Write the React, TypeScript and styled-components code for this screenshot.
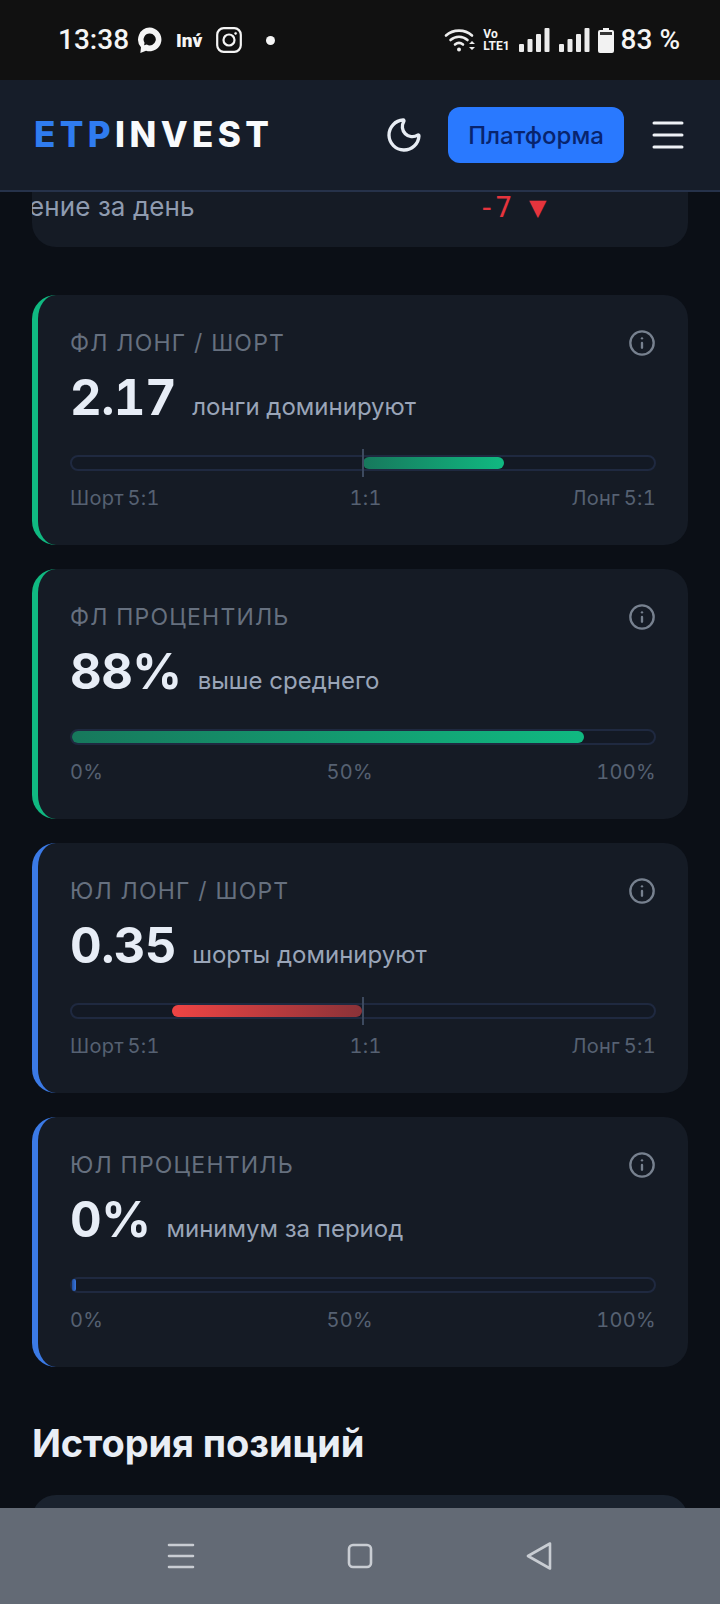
import React from 'react';
import styled, { createGlobalStyle } from 'styled-components';
import { Info, Moon } from 'lucide-react';

const GlobalStyle = createGlobalStyle`
  html, body {
    margin: 0;
    padding: 0;
    background: #0b0f17;
  }
  * {
    box-sizing: border-box;
  }
`;

const Screen = styled.div`
  width: 720px;
  height: 1604px;
  display: flex;
  flex-direction: column;
  overflow: hidden;
  background: #0b0f16;
  font-family: Inter, 'Noto Sans', sans-serif;
`;

const StatusBar = styled.div`
  height: 80px;
  flex: none;
  display: flex;
  align-items: center;
  justify-content: space-between;
  padding: 0 40px 0 58px;
  background: #111111;
  color: #f5f5f5;
  font-family: Roboto, sans-serif;
`;

const StatusGroup = styled.div`
  display: flex;
  align-items: center;
`;

const StatusText = styled.span`
  font-size: 28px;
  font-weight: 500;
  line-height: 32px;
`;

const InvMark = styled.span`
  margin: 0 14px 0 13px;
  font-size: 19px;
  font-weight: 900;
`;

const Dot = styled.span`
  width: 9px;
  height: 9px;
  margin-left: 24px;
  border-radius: 50%;
  background: #f5f5f5;
`;

const VoLte = styled.span`
  display: flex;
  flex-direction: column;
  margin: 0 9px 0 8px;
  font-size: 12px;
  font-weight: 700;
  line-height: 12px;
`;

const SignalGap = styled.span`
  width: 9px;
`;

const Header = styled.header`
  height: 112px;
  flex: none;
  display: flex;
  align-items: center;
  padding: 0 36px 0 34px;
  background: #161d29;
  border-bottom: 2px solid #26324a;
`;

const Logo = styled.div`
  flex: 1;
  margin-bottom: 2px;
  font-size: 35px;
  font-weight: 800;
  letter-spacing: 4.4px;
  color: #f8fafc;
`;

const LogoAccent = styled.span`
  color: #2f7cf0;
`;

const ThemeToggle = styled.div`
  display: flex;
  margin-right: 24px;
  color: #e8edf4;
`;

const PlatformButton = styled.div`
  width: 176px;
  height: 56px;
  display: flex;
  align-items: center;
  justify-content: center;
  border-radius: 12px;
  background: #2979ff;
  color: #08246e;
  font-size: 24px;
  font-weight: 500;
`;

const Burger = styled.svg`
  width: 32px;
  height: 30px;
  margin-left: 28px;
`;

const Main = styled.main`
  flex: 1;
  min-height: 0;
  overflow: hidden;
  padding: 0 32px;
`;

const ClippedCard = styled.div`
  height: 55px;
  display: flex;
  overflow: hidden;
  border-radius: 0 0 24px 24px;
  background: #151b25;
  font-size: 26px;
  line-height: 30px;
`;

const ClippedLabel = styled.span`
  width: 449px;
  flex: none;
  margin-left: -3px;
  color: #8f9bb0;
  letter-spacing: 0.1px;
  white-space: nowrap;
`;

const DayChange = styled.span`
  color: #e5343d;
  font-family: 'DejaVu Sans Mono', monospace;
  font-size: 29px;
  letter-spacing: -0.5px;
`;

const CardList = styled.div`
  display: flex;
  flex-direction: column;
  gap: 24px;
  margin-top: 48px;
`;

const Card = styled.section<{ $accent: string }>`
  height: 250px;
  padding: 32px 32px 0 32px;
  border-left: 6px solid ${(p) => p.$accent};
  border-radius: 24px;
  background: #151b25;
`;

const CardTop = styled.div`
  display: flex;
  align-items: center;
  justify-content: space-between;
  height: 32px;
`;

const CardLabel = styled.div`
  color: #66707f;
  font-size: 23px;
  letter-spacing: 1.2px;
`;

const InfoIcon = styled(Info)`
  color: #77818f;
`;

const ValueRow = styled.div`
  display: flex;
  align-items: baseline;
  gap: 16px;
  margin-top: 8px;
  height: 62px;
`;

const Value = styled.span`
  color: #e7edf6;
  font-size: 49px;
  font-weight: 700;
  font-feature-settings: 'tnum';
  letter-spacing: -0.5px;
  line-height: 62px;
`;

const ValueNote = styled.span`
  color: #9aa5b8;
  font-size: 24px;
`;

const Track = styled.div`
  position: relative;
  height: 16px;
  margin-top: 26px;
  border: 2px solid #1f2940;
  border-radius: 8px;
  background: #131924;
`;

const Fill = styled.div<{ $from: number; $to: number; $colors: string }>`
  position: absolute;
  top: 0;
  bottom: 0;
  left: ${(p) => p.$from}px;
  width: ${(p) => p.$to - p.$from}px;
  border-radius: 6px;
  background: linear-gradient(90deg, ${(p) => p.$colors});
`;

const CenterMark = styled.div`
  position: absolute;
  top: -8px;
  bottom: -8px;
  left: 290px;
  width: 2px;
  background: #3d4a5f;
`;

const Scale = styled.div`
  display: flex;
  justify-content: space-between;
  margin-top: 13px;
  color: #566172;
  font-size: 20px;
  font-feature-settings: 'tnum';
  letter-spacing: 0.3px;
  word-spacing: -2px;
  line-height: 28px;
`;

const SectionTitle = styled.h2`
  margin: 53px 0 0;
  color: #e9eef5;
  font-size: 38px;
  font-weight: 700;
  letter-spacing: -0.1px;
  line-height: 46px;
`;

const NextCard = styled.div`
  height: 60px;
  margin-top: 29px;
  border-radius: 24px;
  background: #1a222e;
`;

const NavBar = styled.nav`
  height: 96px;
  flex: none;
  display: flex;
  align-items: center;
  justify-content: center;
  gap: 151px;
  background: #636a75;
`;

const NavIcon = styled.svg`
  width: 28px;
  height: 28px;
  fill: none;
  stroke: #c9cdd3;
  stroke-width: 2.6;
  stroke-linecap: round;
  stroke-linejoin: round;
`;

type CardData = {
  label: string;
  value: string;
  note: string;
  accent: string;
  scale: string[];
  from: number;
  to: number;
  colors: string;
  centered?: boolean;
};

const GREEN = '#10b981';
const BLUE = '#3b7ae6';

const cards: CardData[] = [
  {
    label: 'ФЛ ЛОНГ / ШОРТ',
    value: '2.17',
    note: 'лонги доминируют',
    accent: GREEN,
    scale: ['Шорт 5:1', '1:1', 'Лонг 5:1'],
    from: 291,
    to: 432,
    colors: '#17785c, #10b981',
    centered: true,
  },
  {
    label: 'ФЛ ПРОЦЕНТИЛЬ',
    value: '88%',
    note: 'выше среднего',
    accent: GREEN,
    scale: ['0%', '50%', '100%'],
    from: 0,
    to: 512,
    colors: '#17785c, #10b981',
  },
  {
    label: 'ЮЛ ЛОНГ / ШОРТ',
    value: '0.35',
    note: 'шорты доминируют',
    accent: BLUE,
    scale: ['Шорт 5:1', '1:1', 'Лонг 5:1'],
    from: 100,
    to: 290,
    colors: '#ef4444, #8a3238',
    centered: true,
  },
  {
    label: 'ЮЛ ПРОЦЕНТИЛЬ',
    value: '0%',
    note: 'минимум за период',
    accent: BLUE,
    scale: ['0%', '50%', '100%'],
    from: 0,
    to: 4,
    colors: '#1f4ea0, #3b78e0',
  },
];

const MetricCard: React.FC<{ data: CardData }> = ({ data }) => (
  <Card $accent={data.accent}>
    <CardTop>
      <CardLabel>{data.label}</CardLabel>
      <InfoIcon size={28} strokeWidth={2} />
    </CardTop>
    <ValueRow>
      <Value>{data.value}</Value>
      <ValueNote>{data.note}</ValueNote>
    </ValueRow>
    <Track>
      <Fill $from={data.from} $to={data.to} $colors={data.colors} />
      {data.centered && <CenterMark />}
    </Track>
    <Scale>
      {data.scale.map((s) => (
        <span key={s}>{s}</span>
      ))}
    </Scale>
  </Card>
);

const SignalBars = () => (
  <svg width="31" height="25" viewBox="0 0 31 25" fill="#ececec">
    <rect x="0" y="16" width="5" height="8" rx="1" />
    <rect x="8.5" y="11" width="5" height="13" rx="1" />
    <rect x="17" y="6" width="5" height="18" rx="1" />
    <rect x="25.5" y="0" width="5" height="24" rx="1" />
  </svg>
);

export default function App() {
  return (
    <Screen>
      <GlobalStyle />
      <StatusBar>
        <StatusGroup>
          <StatusText>13:38</StatusText>
          <svg width="27" height="28" viewBox="0 0 24 26" style={{ marginLeft: 7 }}>
            <path
              fill="#f5f5f5"
              fillRule="evenodd"
              d="M12 1.5a11 11 0 1 1-3.2 21.5L3.5 25l.6-5.3A11 11 0 0 1 12 1.5Zm0 5.5a5.5 5.5 0 0 0-4.6 8.5l-.4 2.4 2.5-.7A5.5 5.5 0 1 0 12 7Z"
            />
          </svg>
          <InvMark>Inv&#769;</InvMark>
          <svg width="26" height="26" viewBox="0 0 26 26" fill="none" stroke="#f5f5f5" strokeWidth="2.2">
            <rect x="1.2" y="1.2" width="23.6" height="23.6" rx="6.5" />
            <circle cx="13" cy="13" r="5.5" />
            <circle cx="19.6" cy="6.4" r="1" fill="#f5f5f5" strokeWidth="0.8" />
          </svg>
          <Dot />
        </StatusGroup>
        <StatusGroup>
          <svg width="31" height="26" viewBox="0 0 31 26" fill="none" stroke="#ececec" strokeWidth="2.6" strokeLinecap="round">
            <path d="M2 8.5C9 2 21 2 28 8.5" />
            <path d="M6.5 13c5-4.4 12-4.4 17 0" />
            <path d="M11 17.5c2.4-2 5.6-2 8 0" />
            <circle cx="15" cy="22.5" r="2" fill="#ececec" stroke="none" />
            <path d="M25 17l3-3 3 3zM25 20l3 3 3-3z" fill="#ececec" stroke="none" />
          </svg>
          <VoLte>
            <span>Vo</span>
            <span>LTE1</span>
          </VoLte>
          <SignalBars />
          <SignalGap />
          <SignalBars />
          <svg width="16" height="25" viewBox="0 0 16 25" style={{ marginLeft: 8 }}>
            <path
              fill="#f2f2f2"
              d="M5 0h6v2h3a2 2 0 0 1 2 2v19a2 2 0 0 1-2 2H2a2 2 0 0 1-2-2V4a2 2 0 0 1 2-2h3Z"
            />
            <rect x="2" y="4" width="12" height="3" fill="#333" />
          </svg>
          <StatusText style={{ marginLeft: 7 }}>83 %</StatusText>
        </StatusGroup>
      </StatusBar>

      <Header>
        <Logo>
          <LogoAccent>ETP</LogoAccent>INVEST
        </Logo>
        <ThemeToggle>
          <Moon size={40} strokeWidth={2} />
        </ThemeToggle>
        <PlatformButton>Платформа</PlatformButton>
        <Burger viewBox="0 0 32 30" fill="none" stroke="#eef1f5" strokeWidth="3" strokeLinecap="round">
          <path d="M2 3h28M2 15h28M2 27h28" />
        </Burger>
      </Header>

      <Main>
        <ClippedCard>
          <ClippedLabel>ение за день</ClippedLabel>
          <DayChange>-7 ▼</DayChange>
        </ClippedCard>
        <CardList>
          {cards.map((c) => (
            <MetricCard key={c.label} data={c} />
          ))}
        </CardList>
        <SectionTitle>История позиций</SectionTitle>
        <NextCard />
      </Main>

      <NavBar>
        <NavIcon viewBox="0 0 28 28">
          <path d="M2 3h24M2 14h24M2 25h24" />
        </NavIcon>
        <NavIcon viewBox="0 0 28 28">
          <rect x="3" y="3" width="22" height="22" rx="4" />
        </NavIcon>
        <NavIcon viewBox="0 0 28 28">
          <path d="M25 1.5 L3 14 L25 26.5 Z" />
        </NavIcon>
      </NavBar>
    </Screen>
  );
}
